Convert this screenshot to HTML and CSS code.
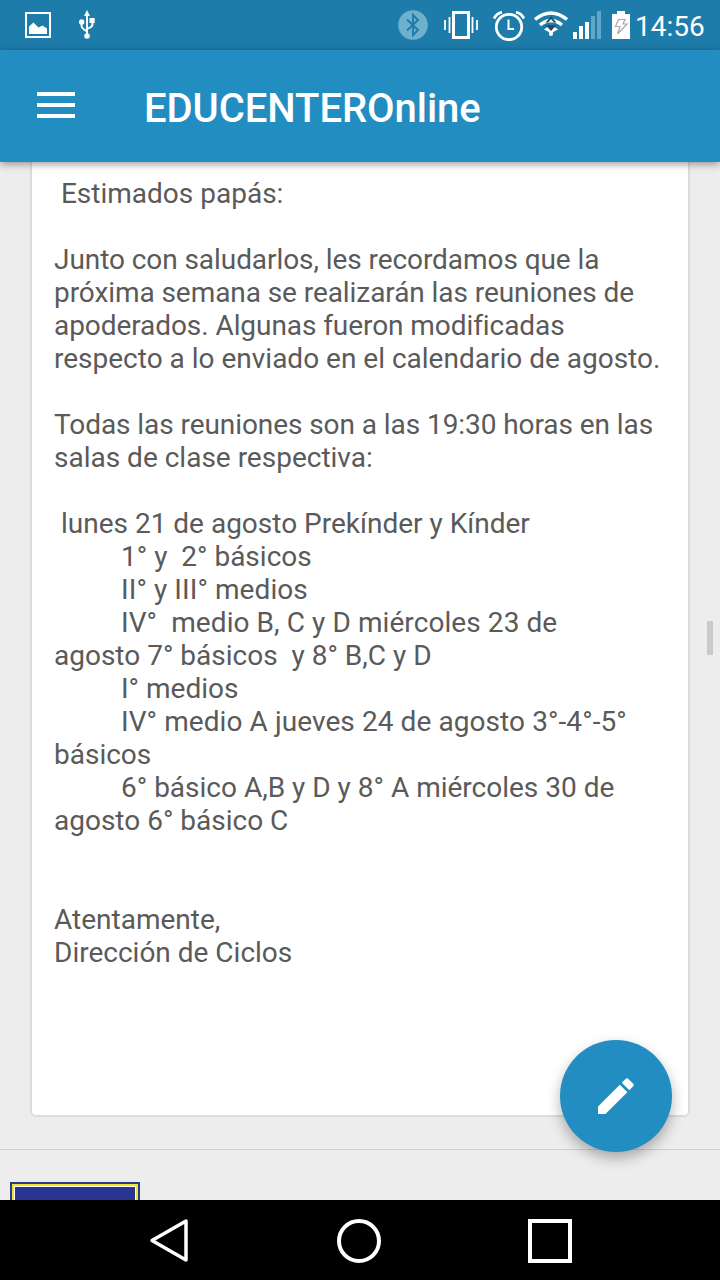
FILE: index.html
```
<!DOCTYPE html>
<html lang="es">
    <head>
        <meta charset="utf-8">
        <title>EDUCENTEROnline</title>
        <link rel="stylesheet" href="styles.css">
    </head>
    <body>
        <div id="status">
            <svg class="picture" width="26" height="26" viewBox="0 0 26 26">
                <rect x="1" y="1" width="24" height="24" fill="none" stroke="#fff" stroke-width="2"/>
                <path d="M4 22v-7.500l4.500-4 5 5 4-2 4.500 3v5.500z" fill="#fff"/>
            </svg>
            <svg class="usb" width="16" height="30" viewBox="0 0 16 30">
                <path d="M8 4v21M2.500 12v3.500q0 2.500 2.500 4l3 2M13.500 10v4q0 2.500-2.500 3.500l-3 1.500" fill="none" stroke="#fff" stroke-width="1.900"/>
                <path d="M8 0l3 6H5zM10.500 8h5.200v5h-5.200z" fill="#fff"/>
                <circle cx="2.700" cy="12" r="2.700" fill="#fff"/>
                <circle cx="8" cy="26" r="2.800" fill="#fff"/>
            </svg>

            <svg class="bluetooth" width="30" height="30" viewBox="0 0 30 30">
                <circle cx="15" cy="15" r="14.800" fill="#6fb0cd"/>
                <path d="M9 9.500l11 10.500-5 5V5l5 5L9 20.500" fill="none" stroke="#1e7cab" stroke-width="2"/>
            </svg>
            <svg class="vibrate" width="34" height="28" viewBox="0 0 34 28">
                <rect x="9.500" y="1.500" width="15" height="25" fill="none" stroke="#fff" stroke-width="3"/>
                <path d="M1 9v10M5.500 6v16M28.500 6v16M33 9v10" stroke="#fff" stroke-width="1.800"/>
            </svg>
            <svg class="alarm" width="32" height="30" viewBox="0 0 32 30">
                <circle cx="16" cy="16" r="12.700" fill="none" stroke="#fff" stroke-width="2.800"/>
                <path d="M15.500 8.500v9.500H21" fill="none" stroke="#fff" stroke-width="2"/>
                <path d="M1 7.500q2.500-5 8-6.300M31 7.500q-2.500-5-8-6.300" fill="none" stroke="#fff" stroke-width="2.800"/>
            </svg>
            <svg class="wifi" width="34" height="26" viewBox="0 0 34 26">
                <path d="M1 8.500q16-13 32 0M6 14q11-9 22 0" fill="none" stroke="#fff" stroke-width="3.400"/>
                <path d="M10 18.500q7-7 14 0l-4 2-3 3-3-3z" fill="#fff"/>
                <path d="M17 5.500l5.500 6h-11zM11.500 14h11L17 20z" fill="#254b60"/>
                <path d="M17 8l3 3.500h-6z" fill="#e8f3f7"/>
                <circle cx="17" cy="23" r="2" fill="#fff"/>
            </svg>
            <svg class="signal" width="28" height="28" viewBox="0 0 28 28">
                <path d="M0 21h4v7H0zM6 15h4v13H6zM12 11h4v17h-4z" fill="#fff"/>
                <path d="M18 5h4v23h-4zM24 0h4v28h-4z" fill="#62a7c6"/>
            </svg>
            <svg class="battery" width="18" height="28" viewBox="0 0 18 28">
                <path d="M5 0h8v3h5v25H0V3h5z" fill="#fff"/>
                <path d="M6.500 8.500H13L11 13h4L5.500 23l2.500-7.500H3.500z" fill="none" stroke="#aaa" stroke-width="1.200"/>
            </svg>
            <span class="clock">14:56</span>
        </div>

        <div id="header">
            <div class="menu">
                <span></span>
                <span></span>
                <span></span>
            </div>
            <h1>EDUCENTEROnline</h1>
        </div>

        <div id="content">
            <div class="card">
                <p> Estimados papás:</p>
                <p><span class="tight">Junto con saludarlos, les recordamos que la
próxima semana se realizarán las reuniones de
apoderados. Algunas fueron modificadas</span>
respecto a lo enviado en el calendario de agosto.</p>
                <p><span class="tight">Todas las reuniones son a las 19:30 horas en las</span>
salas de clase respectiva:</p>
                <p> lunes 21 de agosto Prekínder y Kínder
<span class="tab"></span>1° y  2° básicos
<span class="tab"></span><span class="loose">II° y III° medios</span>
<span class="tab"></span><span class="loose">IV°  medio B, C y D miércoles 23 de</span>
agosto 7° básicos  y 8° B,C y D
<span class="tab"></span>I° medios
<span class="tab"></span><span class="loose">IV° medio A jueves 24 de agosto 3°-4°-5°</span>
básicos
<span class="tab"></span>6° básico A,B y D y 8° A miércoles 30 de
agosto 6° básico C</p>
                <p class="sign">Atentamente,
Dirección de Ciclos</p>
            </div>
            <div class="next">
                <div class="logo"></div>
            </div>

            <div class="scrollbar"></div>
            <div class="fab">
                <svg width="36" height="36" viewBox="0 0 36 36" fill="#fff">
                    <path d="M0 28.500L21.800 6.700l7.500 7.500L7.500 36H0z"/>
                    <path d="M23.800 4.700L27.500 1q1.500-1.500 3 0L35 5.500q1.500 1.500 0 3l-3.700 3.700z"/>
                </svg>
            </div>
        </div>

        <div id="nav">
            <svg class="back" width="40" height="46" viewBox="0 0 40 46">
                <path d="M37 3v39L3 22.500z" fill="none" stroke="#fff" stroke-width="3.500" stroke-linejoin="round"/>
            </svg>
            <div class="home"></div>
            <div class="recent"></div>
        </div>
    </body>
</html>
```
FILE: styles.css
```
* {
    box-sizing: border-box;
}

body {
    margin: 0;
    height: 1280px;
    display: flex;
    flex-direction: column;
    overflow: hidden;
    background: #ededed;
    color: #5a5a5a;
    font-family: Roboto, "Liberation Sans", sans-serif;
}

svg {
    display: block;
    flex: none;
}

#status {
    display: flex;
    align-items: flex-start;
    height: 50px;
    padding: 0 14px 0 25px;
    background: #1e7cab;
    color: white;
}

.picture {
    margin-top: 12px;
}

.usb {
    margin: 10px auto 0 28px;
}

.bluetooth {
    margin-top: 10px;
}

.vibrate {
    margin: 11px 0 0 16px;
}

.alarm {
    margin: 11px 0 0 15px;
}

.wifi {
    margin: 11px 0 0 9px;
}

.signal {
    margin: 11px 0 0 5px;
}

.battery {
    margin: 11px 0 0 11px;
}

.clock {
    width: 71px;
    margin-left: 5px;
    font-size: 28px;
    line-height: 54px;
}

#header {
    position: relative;
    z-index: 1;
    display: flex;
    align-items: center;
    height: 112px;
    padding-left: 37px;
    background: #228dc1;
    color: white;
    box-shadow: 0 2px 8px rgba(0, 0, 0, 0.4);
}

.menu {
    display: flex;
    flex-direction: column;
    gap: 7px;
    width: 38px;
    margin-bottom: 2px;
}

.menu span {
    height: 4px;
    background: white;
}

h1 {
    margin: 6px 0 0 69px;
    font-size: 40px;
    font-weight: 500;
    line-height: 48px;
    letter-spacing: -0.05px;
}

#content {
    position: relative;
    flex: 1;
    overflow: hidden;
}

.card {
    width: 660px;
    height: 965px;
    margin: -10px 0 0 30px;
    padding: 23px 0 0 22px;
    background: white;
    border: 2px solid #dcdcdc;
    border-radius: 6px;
}

.card p {
    margin: 0 0 33px;
    font-size: 28px;
    line-height: 33px;
    white-space: pre;
}

.card .sign {
    margin-top: 66px;
}

.tab {
    display: inline-block;
    width: 67px;
}

.tight {
    letter-spacing: -0.07px;
}

.loose {
    letter-spacing: 0.08px;
}

.next {
    margin-top: 32px;
    padding: 32px 10px 0;
    border-top: 1px solid #cfcfcf;
}

.logo {
    width: 130px;
    height: 130px;
    background: #293590;
    border: 2px solid #273b8a;
    box-shadow: inset 0 0 0 2px #f0e32c, inset 0 0 0 3px #fff;
}

.scrollbar {
    position: absolute;
    top: 459px;
    right: 7px;
    width: 6px;
    height: 34px;
    background: #cacaca;
}

.fab {
    position: absolute;
    right: 48px;
    bottom: 48px;
    display: flex;
    align-items: center;
    justify-content: center;
    width: 112px;
    height: 112px;
    border-radius: 50%;
    background: #228dc1;
    box-shadow: 0 6px 14px rgba(0, 0, 0, 0.3);
}

#nav {
    display: flex;
    align-items: center;
    height: 80px;
    padding: 2px 0 0 149px;
    background: black;
}

.home {
    width: 44px;
    height: 44px;
    margin-left: 148px;
    border: 4px solid white;
    border-radius: 50%;
}

.recent {
    width: 44px;
    height: 44px;
    margin-left: 147px;
    border: 4px solid white;
}
```
